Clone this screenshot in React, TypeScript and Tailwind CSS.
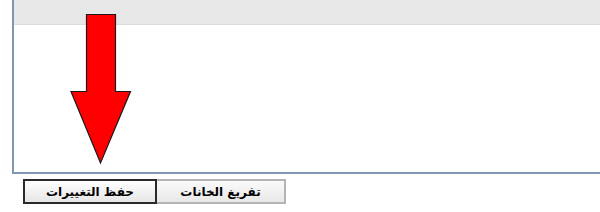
import React from "react";

export default function App() {
  return (
    <div className="relative w-[600px] h-[212px] bg-white overflow-hidden" style={{ fontFamily: '"DejaVu Sans", sans-serif' }}>
      <div className="ml-[12px] h-[174px] border-l-2 border-b-2 border-[#7f97b2] flex flex-col">
        <div className="h-[25px] bg-[#e7e7e7] border-b border-[#dcdcdc]" />
        <div className="flex-1 bg-white" />
      </div>
      <div dir="rtl" className="flex flex-row-reverse justify-start pl-[23px] mt-[5px] h-[25px]" >
        <button className="w-[134px] h-[25px] border-2 border-[#2a2a2a] bg-gradient-to-b from-[#ffffff] to-[#e6e6e6] text-[12px] font-bold text-black leading-none">
          حفظ التغييرات
        </button>
        <button className="w-[129px] h-[25px] border-2 border-l-0 border-[#b4b4b4] bg-gradient-to-b from-[#fafafa] to-[#e8e8e8] text-[12px] font-bold text-black leading-none">
          تفريغ الخانات
        </button>
      </div>
      <svg className="absolute left-[69px] top-[12px]" width="64" height="154" viewBox="0 0 64 154">
        <polygon
          points="17.5,2.5 46.5,2.5 46.5,79.5 61.5,79.5 31.5,151 2,79.5 17.5,79.5"
          fill="#ff0000"
          stroke="#1a1a1a"
          strokeWidth="1.2"
          strokeLinejoin="miter"
        />
      </svg>
    </div>
  );
}
